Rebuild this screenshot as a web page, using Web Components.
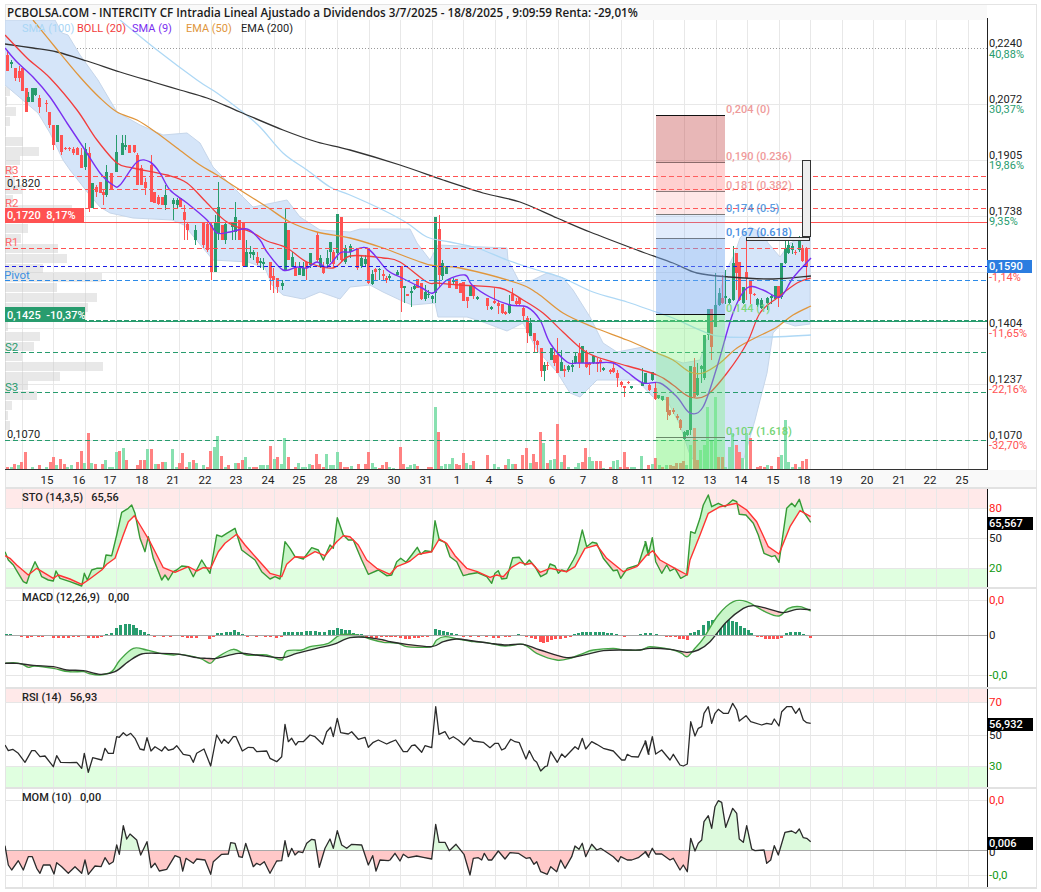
<!DOCTYPE html>
<html lang="es">
<head>
<meta charset="utf-8">
<title>PCBOLSA.COM - INTERCITY CF</title>
<style>
  html, body { margin: 0; background: #fff; }
  body { font-family: Roboto, "Liberation Sans", sans-serif; }
</style>
</head>
<body>
<chart-page>
  <chart-title>PCBOLSA.COM - INTERCITY CF Intradia Lineal Ajustado a Dividendos 3/7/2025 - 18/8/2025 , 9:09:59 Renta: -29,01%</chart-title>
  <price-panel></price-panel>
  <osc-panel kind="sto">STO (14,3,5)&nbsp;&nbsp; 65,56</osc-panel>
  <osc-panel kind="macd">MACD (12,26,9)&nbsp;&nbsp; 0,00</osc-panel>
  <osc-panel kind="rsi">RSI (14)&nbsp;&nbsp; 56,93</osc-panel>
  <osc-panel kind="mom">MOM (10)&nbsp;&nbsp; 0,00</osc-panel>
</chart-page>

<script>
// ---- helpers ----
const GREEN = '#289c6e', RED = '#ff5252';
const P_LEFT = 5, P_AXIS = 987, P_RIGHT = 1037;
// vertical day lines, same in every panel
const dayLines = [];
for (let k = 0; k < 31; k++) dayLines.push(Math.round(21.5 + 31.55 * k) + 0.5);

// readings were taken at 3x, so pts() brings them back to page pixels
const pts = (ox, oy, a) => a.map(([X, Y]) => [ox + X / 3, oy + Y / 3]);
const poly = (a) => a.map(p => p[0].toFixed(1) + ',' + p[1].toFixed(1)).join(' ');
const line = (a, c, w) => `<polyline points="${poly(a)}" fill="none" stroke="${c}" stroke-width="${w || 1.4}" stroke-linejoin="round"/>`;
const hline = (y, c, dash, x2, w) => `<line x1="${P_LEFT}" x2="${x2 || P_AXIS}" y1="${y}" y2="${y}" stroke="${c}" stroke-width="${w || 1}"${dash ? ` stroke-dasharray="${dash}"` : ''}/>`;
const text = (x, y, s, c, extra) => `<text x="${x}" y="${y + 4}" fill="${c}" ${extra || ''}>${s}</text>`;
const frame = (top, bottom) => `<g shape-rendering="crispEdges" stroke="#e4e4e4"><line x1="5.5" x2="5.5" y1="${top}" y2="${bottom}"/><line x1="1036.5" x2="1036.5" y1="${top}" y2="${bottom}"/></g>`;

// moving averages are curves, not corners
function curve(a, c, w) {
  let d = `M${a[0][0]} ${a[0][1]}`;
  for (let i = 0; i < a.length - 1; i++) {
    const p0 = a[i - 1] || a[i], p1 = a[i], p2 = a[i + 1], p3 = a[i + 2] || p2;
    const c1 = [p1[0] + (p2[0] - p0[0]) / 6, p1[1] + (p2[1] - p0[1]) / 6];
    const c2 = [p2[0] - (p3[0] - p1[0]) / 6, p2[1] - (p3[1] - p1[1]) / 6];
    d += `C${c1[0].toFixed(1)} ${c1[1].toFixed(1)} ${c2[0].toFixed(1)} ${c2[1].toFixed(1)} ${p2[0]} ${p2[1]}`;
  }
  return `<path d="${d}" fill="none" stroke="${c}" stroke-width="${w || 1.3}"/>`;
}

function at(series, x) {
  if (x <= series[0][0]) return series[0][1];
  for (let i = 1; i < series.length; i++) {
    if (x <= series[i][0]) {
      const [x0, y0] = series[i - 1], [x1, y1] = series[i];
      return y0 + (y1 - y0) * (x - x0) / (x1 - x0 || 1);
    }
  }
  return series[series.length - 1][1];
}

// filled area between two series, one colour per side
function fillBetween(a, b, up, down) {
  const start = Math.max(a[0][0], b[0][0]), end = Math.min(a[a.length - 1][0], b[b.length - 1][0]);
  let out = '', run = [], sign = 0;
  const flush = () => {
    if (run.length > 1) {
      const shape = run.map(r => [r[0], r[1]]).concat(run.slice().reverse().map(r => [r[0], r[2]]));
      out += `<polygon points="${poly(shape)}" fill="${sign > 0 ? up : down}"/>`;
    }
  };
  for (let x = start; x <= end; x += 0.5) {
    const ya = at(a, x), yb = at(b, x), s = ya < yb ? 1 : -1;
    if (s !== sign && sign !== 0) { flush(); run = run.slice(-1); }
    sign = s;
    run.push([x, ya, yb]);
  }
  flush();
  return out;
}

function gridV(top, bottom) {
  return dayLines.map(x => `<line x1="${x}" x2="${x}" y1="${top}" y2="${bottom}" stroke="#e8e8e8"/>`).join('');
}

// ---- price data ----
// x, body top, body bottom, high, low, colour
const candles = [
[7,55,71,50,71,'r'],[11,62,64,60,68,'g'],[15,68,78,68,81,'r'],[19,71,78,66,82,'r'],[22,68,91,68,91,'r'],[26,88,112,88,112,'r'],
[28,97,102,92,102,'g'],[32,88,102,88,102,'g'],[35,88,95,88,96,'g'],[39,98,107,95,113,'r'],[46,103,104,100,112,'r'],[49,112,125,112,128,'r'],
[53,125,145,125,150,'r'],[57,125,142,125,142,'g'],[61,135,152,135,155,'r'],[65,148,149,147,150,'r'],[69,148,149,147,151,'r'],[73,149,153,147,155,'r'],
[77,148,155,147,155,'r'],[81,155,168,148,168,'r'],[85,149,167,143,170,'g'],[89,153,208,147,212,'r'],[92,183,208,183,208,'g'],[96,187,192,185,197,'r'],
[100,182,193,182,193,'r'],[103,192,195,190,205,'r'],[106,172,195,165,197,'g'],[111,173,189,173,189,'r'],[116,152,172,135,172,'g'],[122,143,155,135,155,'g'],
[125,145,147,135,150,'g'],[129,145,153,145,153,'r'],[134,145,152,145,153,'r'],[137,155,185,153,185,'r'],[141,168,185,165,185,'r'],[145,182,188,178,195,'r'],
[151,165,202,155,202,'r'],[154,192,203,192,203,'r'],[158,197,204,195,205,'r'],[162,197,205,197,205,'r'],[165,195,205,185,210,'g'],[173,200,204,198,220,'g'],
[177,200,205,198,208,'g'],[180,198,207,198,207,'r'],[184,212,220,205,240,'r'],[187,224,230,222,240,'r'],[195,230,240,225,245,'g'],[203,223,245,222,248,'r'],
[207,224,250,222,252,'r'],[211,225,272,222,280,'r'],[215,223,272,215,272,'g'],[218,207,233,182,240,'g'],[222,225,240,225,240,'r'],[225,224,240,222,244,'g'],
[232,222,227,222,240,'g'],[235,217,232,202,240,'g'],[239,220,240,220,240,'r'],[243,222,266,222,266,'r'],[246,252,267,240,267,'g'],[250,252,254,246,258,'g'],
[253,252,255,250,260,'g'],[257,257,263,252,265,'r'],[260,261,263,258,268,'g'],[263,262,264,258,270,'g'],[270,262,278,262,290,'r'],[273,276,280,268,293,'r'],
[277,278,287,278,293,'r'],[282,283,286,280,290,'g'],[285,222,270,208,270,'g'],[288,230,260,230,260,'r'],[292,257,267,252,267,'g'],[295,267,276,262,276,'r'],
[299,268,275,262,275,'g'],[303,268,276,262,276,'g'],[306,262,268,262,280,'r'],[310,253,265,253,268,'g'],[317,235,260,232,262,'r'],[320,258,266,255,268,'g'],
[323,268,273,262,274,'r'],[327,258,264,250,268,'g'],[330,242,252,242,262,'g'],[333,252,264,250,268,'r'],[337,214,253,214,260,'g'],[341,217,260,217,262,'r'],
[345,248,262,245,264,'g'],[350,246,252,244,258,'g'],[357,248,268,248,270,'r'],[361,258,266,255,268,'g'],[365,259,264,255,266,'g'],[368,248,283,248,284,'r'],
[372,274,284,270,285,'g'],[375,269,272,268,280,'r'],[379,269,270,268,280,'g'],[383,274,276,270,280,'r'],[386,278,280,276,283,'r'],[389,276,278,274,280,'g'],
[397,272,275,270,275,'g'],[401,266,288,266,312,'r'],[404,286,288,286,303,'g'],[407,294,296,294,296,'r'],[411,291,293,287,307,'g'],[414,286,289,284,290,'g'],
[417,279,288,279,288,'r'],[421,283,299,283,300,'r'],[425,292,299,285,301,'g'],[428,294,295,290,298,'g'],[432,296,299,295,303,'g'],[435,217,293,217,303,'g'],
[439,229,275,215,287,'r'],[442,263,276,260,280,'g'],[446,266,274,266,274,'g'],[449,279,288,279,288,'r'],[453,280,282,278,284,'g'],[456,279,289,279,289,'r'],
[460,283,293,283,293,'r'],[463,282,301,282,301,'r'],[467,297,301,297,308,'r'],[470,285,296,285,296,'g'],[473,285,296,285,299,'r'],[477,297,299,296,300,'g'],
[487,298,306,298,310,'r'],[491,307,309,306,310,'g'],[494,301,303,288,304,'r'],[498,303,306,300,314,'r'],[502,304,313,304,314,'r'],[505,312,314,311,315,'r'],
[509,304,313,295,314,'g'],[512,294,301,288,301,'r'],[516,301,304,298,305,'r'],[519,298,304,298,305,'r'],[523,308,316,306,322,'r'],[527,318,333,316,343,'r'],
[530,323,336,318,336,'g'],[534,333,341,333,352,'r'],[537,341,345,340,352,'r'],[541,348,371,348,377,'r'],[544,365,371,362,381,'g'],[547,365,366,362,370,'r'],
[551,348,360,348,360,'g'],[554,355,363,350,366,'r'],[557,355,373,338,373,'r'],[561,362,371,350,371,'g'],[564,369,371,365,377,'r'],[568,366,370,365,372,'g'],
[572,365,367,360,372,'g'],[575,356,363,352,364,'g'],[579,353,363,343,368,'r'],[582,346,363,346,363,'g'],[586,353,367,350,368,'r'],[589,363,365,362,375,'r'],
[593,356,363,356,364,'g'],[597,362,364,358,372,'r'],[600,360,362,358,372,'r'],[603,368,370,367,371,'g'],[610,370,372,369,374,'r'],[613,368,372,362,373,'r'],
[617,373,378,370,387,'r'],[621,382,385,381,387,'r'],[624,386,388,386,397,'r'],[628,382,383,381,384,'r'],[631,386,388,386,389,'g'],[642,383,386,368,386,'g'],
[645,373,383,373,384,'g'],[649,385,390,384,391,'r'],[652,372,380,372,381,'g'],[655,388,399,383,400,'r'],[658,395,398,395,399,'g'],[662,396,400,396,401,'g'],
[667,397,412,397,420,'r'],[669,410,415,410,416,'r'],[673,410,412,408,414,'r'],[677,416,418,414,420,'r'],[680,420,428,419,430,'r'],[684,432,439,431,440,'g'],
[687,430,435,430,436,'g'],[690,366,430,366,435,'g'],[694,367,397,358,398,'r'],[697,378,395,363,396,'g'],[701,366,369,365,383,'g'],[704,335,378,335,380,'g'],
[708,309,335,309,340,'g'],[711,309,347,309,360,'r'],[715,305,327,273,327,'g'],[719,293,305,288,306,'g'],[722,298,303,275,304,'r'],[725,296,298,270,304,'g'],
[729,299,303,298,304,'g'],[733,263,300,246,301,'g'],[736,253,273,253,290,'r'],[739,262,300,262,301,'r'],[743,287,303,287,304,'g'],[746,272,278,237,300,'r'],
[750,280,294,280,304,'r'],[754,294,295,293,296,'r'],[757,299,305,298,307,'g'],[761,300,308,298,309,'g'],[767,298,303,297,310,'g'],[771,296,298,295,304,'g'],
[775,286,299,286,300,'g'],[778,286,297,286,307,'r'],[781,263,297,263,299,'g'],[785,248,263,238,264,'g'],[788,245,253,240,254,'g'],[792,246,250,243,254,'g'],
[795,252,253,250,255,'r'],[799,240,250,236,252,'g'],[802,248,261,245,262,'r'],[806,248,267,247,280,'r']
];

// x, bar top, colour
const volumes = [
...[[22,680,'r'],[33,682,'g'],[44,673,'r'],[55,676,'g'],[65,667,'r'],[76,637,'r'],[98,682,'g'],[118,676,'r'],[140,680,'g'],[150,665,'r'],[160,650,'r'],[170,676,'g'],[181,658,'r'],[192,672,'r'],[203,682,'g'],[213,676,'g'],[232,665,'r'],[244,634,'r'],[254,668,'g'],[265,580,'r'],[275,668,'g'],[286,673,'r'],[308,673,'r'],[316,660,'g'],[328,680,'g'],[338,680,'g'],[349,637,'g'],[359,632,'r'],[370,625,'g'],[380,660,'r'],[412,676,'r'],[422,660,'r'],[433,660,'r'],[443,628,'g'],[454,628,'r'],[465,673,'g'],[476,672,'r'],[486,665,'r'],[496,667,'g'],[518,628,'g'],[528,680,'g'],[538,670,'r'],[548,640,'r'],[558,680,'r'],[568,667,'g'],[580,660,'r'],[590,670,'g'],[610,676,'g'],[622,682,'r'],[632,634,'r'],[643,622,'g'],[652,587,'g'],[664,649,'r'],[675,680,'g'],[685,676,'r'],[706,670,'g'],[716,670,'r'],[727,660,'r'],[737,652,'g'],[748,682,'g'],[760,680,'r'],[770,680,'r'],[780,676,'g'],[791,676,'g'],[802,674,'g'],[812,619,'r'],[823,658,'g'],[833,652,'r'],[844,673,'g'],[854,595,'g'],[865,652,'r'],[886,680,'r'],[896,670,'g'],[907,682,'g'],[917,682,'g'],[928,672,'g'],[938,676,'r'],[949,643,'r'],[959,673,'r'],[970,680,'r'],[980,643,'g'],[990,676,'g'],[1000,676,'g'],[1012,637,'g'],[1022,667,'r'],[1033,680,'r'],[1043,682,'r']].map(v => [v[0] / 3, 240 + v[1] / 3, v[2]]),
...[[5,858,'g'],[25,853,'r'],[45,853,'r'],[55,815,'r'],[66,850,'g'],[76,860,'g'],[87,863,'r'],[98,855,'r'],[108,847,'r'],[118,860,'g'],[130,865,'g'],[152,802,'r'],[160,853,'r'],[172,860,'g'],[182,855,'g'],[192,853,'g'],[203,857,'r'],[235,860,'r'],[245,860,'r'],[256,682,'g'],[266,757,'r'],[275,857,'g'],[287,853,'g'],[298,853,'g'],[308,835,'g'],[319,853,'r'],[329,855,'r'],[340,820,'r'],[350,850,'g'],[360,855,'g'],[370,842,'r'],[412,826,'r'],[433,852,'g'],[445,860,'g'],[466,855,'r'],[476,838,'g'],[487,853,'g'],[497,852,'r'],[518,826,'r'],[529,805,'r'],[540,848,'g'],[550,823,'r'],[560,845,'r'],[571,757,'r'],[581,790,'g'],[592,848,'r'],[602,840,'g'],[612,838,'g'],[622,733,'r'],[634,847,'g'],[644,826,'r'],[655,860,'g'],[676,860,'g'],[686,848,'g'],[697,845,'r'],[706,805,'r'],[717,832,'g'],[728,842,'g'],[740,843,'r'],[750,843,'r'],[760,865,'g'],[780,862,'r'],[790,842,'g'],[802,840,'g'],[812,862,'r'],[823,817,'r'],[833,862,'r'],[844,862,'g'],[854,860,'g'],[875,828,'g'],[896,855,'r'],[907,852,'g'],[917,835,'r']].map(v => [350 + v[0] / 3, 180 + v[1] / 3, v[2]]),
...[[47,1075,'r'],[58,1095,'g'],[68,1100,'r'],[80,1095,'g'],[90,1095,'r'],[100,1097,'r'],[110,1090,'r'],[120,1088,'r'],[130,1082,'r'],[140,1095,'g'],[150,1035,'g'],[163,985,'r'],[172,1080,'r'],[182,1050,'g'],[192,1035,'g'],[203,920,'g'],[215,1020,'g'],[226,890,'g'],[236,1072,'r'],[247,1070,'r'],[256,1100,'g'],[268,1040,'g'],[278,1000,'g'],[288,1035,'r'],[298,1055,'r'],[308,1075,'g'],[319,1000,'g'],[330,1015,'r'],[352,1100,'r'],[362,1097,'r'],[372,1100,'r'],[382,1095,'g'],[394,1098,'r'],[414,1070,'r'],[424,1065,'g'],[436,960,'g'],[446,1085,'g'],[456,1100,'g'],[467,1092,'r'],[478,1100,'g'],[488,1082,'r'],[499,1078,'r']].map(v => [640 + v[0] / 3, 100 + v[1] / 3, v[2]])
];

// volume profile: top, width
const profile = [[87,5],[97,2],[107,11],[117,5],[127,1],[137,18],[147,34],[156,15],[166,8],[176,10],[185,17],[195,8],[205,67],[214,79],[224,23],[234,16],[244,53],[254,62],[264,38],[273,97],[283,52],[293,92],[303,83],[313,80],[322,3],[332,35],[342,29],[352,17],[362,98],[372,55],[381,23],[391,32],[401,7],[411,3],[421,5]];

const band = [[5,20],[55,20],[62,33],[68,35],[80,55],[98,80],[108,97],[117,112],[140,125],[163,135],[187,133],[200,143],[213,167],[223,177],[253,207],[287,200],[300,217],[320,230],[350,232],[360,229],[410,229],[417,243],[430,260],[438,245],[507,248],[508,260],[520,283],[533,280],[547,273],[563,278],[573,290],[590,317],[603,343],[617,352],[643,347],[660,355],[683,363],[700,360],[710,330],[725,273],[735,253],[740,238],[750,227],[762,233],[768,243],[780,257],[790,243],[803,237],[810,235],[810,324],[795,326],[783,322],[773,333],[767,373],[755,420],[743,462],[735,469],[700,469],[690,455],[680,425],[667,400],[653,397],[637,380],[597,380],[580,397],[570,393],[557,372],[537,350],[523,323],[507,331],[483,322],[467,317],[438,317],[435,303],[412,305],[400,300],[383,292],[370,285],[350,287],[340,299],[320,292],[303,299],[283,295],[272,285],[265,268],[248,262],[213,260],[184,225],[172,220],[133,218],[110,213],[100,207],[88,193],[70,170],[63,160],[50,133],[38,113],[5,85]];

const sma100 = [[120,20],[157,50],[197,80],[217,93],[240,110],[260,127],[283,153],[307,170],[330,187],[350,195],[383,210],[407,223],[427,237],[450,242],[477,248],[507,260],[537,270],[563,278],[593,292],[627,302],[653,311],[673,318],[707,333],[727,337],[773,337],[811,335]];
const ema200 = [[5,44],[33,48],[57,52],[87,61],[120,72],[153,82],[180,90],[207,98],[240,112],[283,130],[317,142],[350,150],[400,165],[443,180],[483,193],[520,202],[557,218],[590,232],[637,250],[673,263],[697,273],[730,277],[773,279],[811,276]];
const ema50 = [[33,20],[55,47],[80,77],[100,98],[117,112],[137,120],[157,133],[177,148],[200,165],[217,175],[240,190],[267,207],[290,222],[317,232],[350,238],[383,248],[430,265],[460,268],[517,283],[537,293],[563,313],[593,327],[627,340],[657,353],[673,360],[690,372],[703,373],[720,363],[737,348],[757,337],[777,327],[793,315],[811,306]];
const boll = [[5,35],[27,58],[50,78],[77,110],[97,140],[117,163],[133,168],[167,175],[187,183],[207,203],[227,222],[253,233],[267,241],[287,248],[307,262],[333,268],[350,256],[383,258],[400,262],[427,282],[437,283],[460,285],[500,288],[523,300],[543,313],[563,332],[583,350],[597,357],[617,363],[657,375],[673,385],[690,397],[707,395],[727,373],[747,343],[760,313],[777,298],[797,283],[811,278]];
const sma9 = [[5,48],[17,62],[33,77],[50,97],[67,123],[83,147],[100,173],[113,185],[120,185],[137,162],[150,162],[160,173],[170,190],[187,203],[207,220],[217,233],[230,232],[247,229],[260,240],[267,252],[283,270],[297,267],[307,268],[317,262],[327,267],[340,253],[350,252],[367,248],[387,270],[400,277],[422,288],[433,293],[447,280],[465,275],[472,285],[490,297],[510,305],[527,307],[540,320],[550,343],[567,362],[577,363],[593,363],[613,363],[627,372],[643,383],[660,383],[677,397],[690,413],[703,407],[717,367],[733,313],[747,288],[763,290],[780,297],[793,278],[811,258]];

// ---- oscillator data ----
const sto = {
  k: [...pts(0,485,[[15,200],[25,225],[40,240],[55,265],[70,290],[80,295],[90,265],[105,230],[115,250],[125,275],[145,285],[160,288],[168,258],[180,280],[210,290],[245,303],[253,265],[262,285],[275,255],[290,250],[310,250],[318,210],[335,212],[350,150],[365,82],[385,70],[395,60],[405,85],[420,160],[435,200],[445,155],[460,220],[485,285],[495,270],[505,285],[520,260],[530,255],[545,243],[565,245],[580,275],[605,225],[630,265],[650,150],[665,155],[680,145],[705,130],[725,195],[745,210],[765,225],[785,260],[810,282],[825,275],[840,282],[855,170],[870,190],[885,215],[910,222],[935,188],[955,195],[970,225],[990,180],[1000,190],[1012,98],[1030,150],[1045,165],[1060,165],[1085,225],[1105,268],[1135,255],[1160,272],[1175,270]]),
      ...pts(390,485,[[20,230],[32,220],[48,232],[65,210],[82,187],[93,208],[105,197],[125,200],[135,107],[148,165],[165,172],[180,215],[200,230],[220,272],[235,268],[262,263],[290,275],[305,295],[315,265],[325,257],[335,282],[350,280],[368,218],[388,217],[405,240],[418,225],[435,245],[452,275],[470,265],[480,237],[495,243],[505,265],[515,255],[530,260],[550,225],[560,205],[577,135],[590,185],[607,172],[620,175],[640,220],[670,257],[682,255],[692,280],[712,250],[745,240],[767,170],[777,210]]),
      ...pts(640,485,[[15,170],[25,210],[37,158],[47,230],[65,265],[80,240],[90,258],[105,250],[122,280],[140,270],[152,140],[165,145],[180,100],[190,60],[205,30],[215,65],[235,55],[255,65],[278,45],[290,50],[298,88],[318,90],[340,115],[355,150],[372,205],[395,215],[405,212],[417,232],[440,70],[455,55],[465,65],[478,43],[490,80],[512,112]])],
  d: [...pts(0,485,[[15,212],[30,220],[50,240],[85,270],[110,250],[140,268],[160,280],[175,270],[210,282],[245,298],[265,285],[305,255],[320,238],[345,220],[370,150],[385,110],[403,92],[420,120],[450,170],[490,248],[525,262],[565,245],[590,258],[610,248],[632,250],[655,200],[675,175],[710,148],[735,180],[770,220],[810,265],[845,275],[860,238],[885,215],[915,217],[945,200],[975,212],[1010,170],[1030,152],[1050,155],[1075,180],[1100,225],[1130,250],[1170,268]]),
      ...pts(390,485,[[20,245],[45,235],[60,228],[85,208],[125,200],[148,162],[170,175],[195,212],[230,250],[262,260],[300,277],[320,270],[340,275],[365,247],[390,232],[410,238],[425,235],[450,262],[480,250],[505,255],[530,260],[555,245],[585,190],[620,180],[650,220],[700,260],[740,245],[770,210]]),
      ...pts(640,485,[[15,215],[38,197],[60,225],[105,250],[142,270],[150,225],[180,150],[205,85],[240,65],[290,55],[320,75],[350,110],[385,185],[417,207],[450,125],[480,77],[512,95]])]
};
const macd = {
  m: [...pts(0,485,[[15,535],[40,533],[65,537],[85,547],[105,543],[160,550],[205,560],[250,560],[265,565],[300,570],[335,560],[360,525],[400,490],[440,495],[480,505],[520,510],[540,508],[600,520],[630,535],[650,518],[700,493],[740,510],[800,510],[845,525],[860,498],[905,495],[930,485],[985,475],[1020,450],[1070,450],[1110,462],[1150,472]]),
      ...pts(390,485,[[0,473],[25,475],[50,485],[85,487],[125,485],[140,465],[165,455],[205,462],[250,470],[290,473],[345,483],[400,478],[440,505],[500,525],[540,520],[580,505],[610,495],[670,490],[700,495],[750,495],[770,488]]),
      ...pts(640,485,[[30,485],[60,488],[100,495],[125,505],[142,515],[165,490],[190,460],[235,390],[280,350],[320,350],[375,380],[417,393],[445,370],[480,365],[512,378]])],
  s: [...pts(0,485,[[15,535],[50,535],[100,541],[160,545],[200,555],[250,557],[300,568],[345,560],[385,530],[425,507],[480,505],[540,508],[590,518],[620,520],[650,520],[715,505],[770,510],[845,518],[890,505],[950,490],[1000,478],[1050,458],[1100,457],[1150,465]]),
      ...pts(390,485,[[0,470],[50,478],[125,485],[160,470],[200,462],[250,468],[300,475],[350,480],[400,478],[450,495],[530,518],[590,508],[640,497],[700,495],[750,495]]),
      ...pts(640,485,[[30,490],[90,493],[140,502],[175,495],[210,470],[260,410],[310,370],[340,362],[380,370],[430,383],[470,373],[512,374]])],
  // histogram: x at 3x with signed height
  h: [[0,[[18,1],[30,1],[65,-1],[82,-2],[95,-1],[115,-1],[128,-1],[160,-2],[175,-2],[190,-2],[205,-2],[220,-1],[235,-1],[265,-2],[280,-2],[292,-2],[305,-1],[320,1],[335,2],[350,7],[362,10],[375,11],[387,11],[399,10],[410,7],[420,5],[432,3],[445,1],[462,-1],[490,-1],[510,-1],[548,-1],[562,-2],[575,-2],[588,-2],[628,-3],[640,-1],[653,2],[665,2],[678,3],[690,3],[703,5],[716,3],[728,1],[742,-1],[770,-1],[795,-1],[812,-1],[830,-2],[845,-1],[853,3],[865,3],[878,3],[892,3],[905,3],[918,4],[930,4],[945,4],[958,3],[972,3],[988,5],[1000,5],[1012,7],[1024,6],[1036,5],[1048,5],[1060,2],[1072,1],[1085,1],[1100,-1],[1115,-2],[1130,-2],[1145,-1],[1160,-1],[1175,-1]]],
      [390,[[0,-1],[15,-1],[32,-2],[45,-3],[58,-3],[72,-2],[85,-2],[97,-1],[112,-1],[135,6],[147,5],[160,4],[172,3],[185,2],[198,1],[220,-1],[240,-1],[265,-1],[290,-1],[310,-2],[325,-2],[345,-1],[358,-1],[385,1],[410,-1],[425,-2],[435,-3],[450,-6],[460,-7],[472,-6],[485,-4],[497,-3],[512,-3],[525,-2],[540,-1],[553,1],[565,2],[578,3],[590,3],[602,3],[615,3],[628,3],[640,3],[652,2],[665,2],[680,1],[703,-1],[752,1],[765,2]]],
      [640,[[32,2],[48,1],[78,-1],[92,-1],[105,-1],[118,-3],[130,-3],[142,-4],[150,2],[162,3],[175,5],[190,10],[204,14],[216,15],[228,17],[240,17],[252,16],[265,15],[278,14],[290,13],[300,9],[312,7],[325,5],[335,2],[352,-1],[365,-1],[375,-3],[388,-3],[400,-3],[412,-3],[425,-2],[438,2],[450,3],[465,3],[478,3],[490,1],[512,-2]]]]
};
const rsi = [...pts(0,685,[[15,180],[25,197],[38,193],[55,205],[75,232],[95,197],[105,197],[120,215],[135,213],[160,245],[170,212],[182,232],[210,233],[230,232],[245,250],[253,205],[265,262],[278,218],[305,225],[315,190],[325,205],[340,205],[350,155],[358,157],[370,143],[380,152],[392,145],[405,160],[420,192],[432,195],[441,158],[453,198],[465,185],[485,198],[495,185],[505,196],[520,192],[530,182],[550,208],[570,212],[580,232],[590,205],[612,192],[632,243],[650,150],[665,175],[672,163],[685,175],[700,155],[708,155],[727,198],[745,187],[760,188],[770,200],[800,198],[810,220],[830,230],[845,215],[855,118],[865,170],[875,160],[887,180],[895,170],[910,170],[930,150],[945,155],[968,178],[980,140],[992,127],[1000,155],[1012,100],[1022,143],[1045,147],[1055,140],[1075,163],[1095,157],[1105,187],[1120,172],[1135,165],[1160,177]]),
  ...pts(390,685,[[0,172],[17,165],[30,185],[40,200],[52,200],[65,182],[75,180],[95,202],[105,182],[125,188],[137,65],[147,148],[165,140],[178,162],[190,155],[205,165],[222,180],[240,158],[250,168],[280,172],[300,188],[315,175],[325,175],[335,195],[345,190],[362,163],[375,170],[388,173],[408,222],[418,197],[432,225],[440,232],[452,258],[465,245],[472,243],[482,200],[502,232],[515,207],[525,217],[555,185],[565,193],[577,160],[587,192],[605,170],[620,178],[640,190],[670,198],[695,225],[705,225],[712,208],[725,215],[745,216],[767,168],[777,208]]),
  ...pts(640,685,[[15,168],[25,207],[37,155],[47,207],[65,195],[90,225],[100,208],[120,240],[130,243],[142,237],[152,110],[165,153],[175,130],[185,125],[192,85],[205,65],[215,115],[225,85],[235,73],[250,85],[265,85],[278,55],[290,75],[298,108],[318,92],[332,110],[365,120],[380,115],[395,118],[403,102],[417,123],[425,80],[440,65],[455,65],[467,85],[478,70],[490,105],[500,113],[512,115]])];
const mom = [...pts(0,685,[[15,482],[25,540],[35,555],[55,527],[70,555],[85,515],[97,515],[110,550],[120,565],[130,540],[150,540],[162,567],[170,533],[185,545],[205,565],[225,545],[245,565],[255,525],[265,568],[285,543],[303,545],[315,518],[328,538],[340,530],[350,480],[358,508],[370,422],[380,462],[390,447],[410,465],[422,510],[441,470],[453,548],[465,535],[478,558],[500,553],[525,512],[540,518],[548,558],[558,520],[580,535],[590,522],[615,525],[632,568],[640,530],[665,508],[685,507],[692,473],[705,475],[717,515],[727,517],[737,475],[760,545],[770,535],[780,540],[793,530],[810,565],[830,528],[845,527],[855,467],[865,515],[875,490],[885,510],[895,500],[908,503],[920,475],[935,463],[945,465],[958,547],[975,490],[990,462],[1000,490],[1012,437],[1025,480],[1040,490],[1055,478],[1085,480],[1105,540],[1118,512],[1128,558],[1140,525],[1165,527]]),
  ...pts(390,685,[[0,525],[15,505],[30,528],[40,508],[55,518],[80,513],[100,517],[125,522],[137,418],[147,472],[165,472],[178,497],[198,478],[222,508],[240,570],[250,520],[265,518],[275,525],[283,505],[295,525],[305,525],[325,498],[345,522],[360,503],[385,505],[408,520],[420,518],[432,538],[440,530],[452,560],[472,568],[482,545],[500,560],[512,525],[525,550],[545,515],[555,483],[567,493],[577,475],[587,515],[605,478],[620,495],[632,490],[670,515],[685,530],[692,515],[712,525],[725,525],[745,518],[767,500],[777,517]]),
  ...pts(640,685,[[15,500],[25,515],[37,490],[47,507],[65,507],[90,525],[100,520],[120,555],[130,540],[142,560],[152,460],[165,498],[175,475],[185,465],[192,410],[205,392],[215,430],[225,365],[235,347],[245,352],[257,427],[278,370],[290,385],[298,462],[310,472],[320,422],[335,492],[345,497],[372,495],[380,535],[392,525],[403,482],[415,510],[435,442],[455,438],[467,445],[478,432],[490,458],[500,460],[512,470]])];

const PANELS = {
  sto: {
    top: 489, labelY: 497,
    bands: [[489, 508, '#ffe9e9'], [568, 587, '#e0ffe0']], grid: [508, 538, 568],
    axis: [[508, '80', '#f22'], [538, '50', '#222'], [568, '20', '#191']],
    box: [517, '65,567'],
    draw: () => fillBetween(sto.k, sto.d, '#c9f6c9', '#ffc8c8') + line(sto.k, '#359a35') + line(sto.d, '#ff3333')
  },
  macd: {
    top: 589, labelY: 597,
    bands: [], grid: [600, 675], zero: 635,
    axis: [[600, '0,0', '#f22'], [635, '0', '#222'], [675, '-0,0', '#191']],
    draw: () => {
      let bars = '';
      macd.h.forEach(([ox, list]) => list.forEach(([X, h]) => {
        const x = Math.round(ox + X / 3 - 1.5);
        bars += `<rect x="${x}" width="3" y="${h > 0 ? 635 - h : 636}" height="${Math.abs(h)}" fill="${h > 0 ? GREEN : RED}"/>`;
      }));
      return `<g shape-rendering="crispEdges">${bars}</g>` + fillBetween(macd.m, macd.s, '#c9f6c9', '#ffc8c8') + curve(macd.m, '#45a545', 1.4) + curve(macd.s, '#2b2b2b', 1.4);
    }
  },
  rsi: {
    top: 689, labelY: 697,
    bands: [[689, 702, '#ffe9e9'], [767, 787, '#e0ffe0']], grid: [702, 735, 766],
    axis: [[702, '70', '#f22'], [735, '50', '#222'], [766, '30', '#191']],
    box: [718, '56,932'],
    draw: () => line(rsi, '#2b2b2b', 1.3)
  },
  mom: {
    top: 789, labelY: 797,
    bands: [], grid: [800, 875], zero: 850,
    axis: [[800, '0,0', '#f22'], [852, '0', '#222'], [875, '-0,0', '#191']],
    box: [837, '0,006'],
    draw: () => fillBetween(mom, [[5, 850.5], [812, 850.5]], '#ddfadd', '#ffc8c8')
  }
};

// ---- elements ----
class ChartPage extends HTMLElement {
  connectedCallback() {
    this.attachShadow({ mode: 'open' });
    this.shadowRoot.innerHTML = `
      <style>
        :host { display: flex; flex-direction: column; width: 1041px; padding: 4px 0 0 ${P_LEFT}px; box-sizing: border-box; }
      </style>
      <slot></slot>`;
  }
}

class ChartTitle extends HTMLElement {
  connectedCallback() {
    this.attachShadow({ mode: 'open' });
    this.shadowRoot.innerHTML = `
      <style>
        :host { display: block; box-sizing: border-box; height: 16px; width: 1032px; padding-left: 1px; color: #1a1a1a; white-space: nowrap;
                border: 1px solid #e4e4e4; border-width: 1px 1px 0 1px;
                background: linear-gradient(#222, #222) 981px 13px / 1px 2px no-repeat, linear-gradient(#f9f9f9, #f9f9f9) 0 0 / 981px 100% no-repeat;
                font: 600 11.65px/15px "Open Sans", Roboto, sans-serif; }
      </style>
      <slot></slot>`;
  }
}

class PricePanel extends HTMLElement {
  connectedCallback() {
    this.attachShadow({ mode: 'open' });
    this.shadowRoot.innerHTML = `
      <style>
        :host { display: block; height: 467px; border-bottom: 2px solid #e2e2e2; width: 1032px; }
        svg { display: block; font: 11px Roboto, sans-serif; }
      </style>
      <svg width="1032" height="467" viewBox="5 20 1032 467">${this.drawing()}</svg>`;
  }

  drawing() {
    let s = '<rect x="5" y="470" width="1032" height="17" fill="#f9f9f9"/>' + frame(20, 487);
    s += '<clipPath id="plot"><rect x="5" y="20" width="982" height="449"/></clipPath>';
    s += `<g shape-rendering="crispEdges">${gridV(20, 469)}`;
    [104, 160, 216, 272, 328, 384].forEach(y => { s += hline(y + 0.5, '#e8e8e8'); });
    s += hline(48.5, '#999', '1,2');
    s += hline(440.5, '#e8e8e8');
    s += '</g><g clip-path="url(#plot)">';
    s += profile.map(([y, w]) => `<rect x="5" y="${y}" width="${w}" height="9" fill="#c8c8c8" opacity=".42"/>`).join('');
    s += `<polygon points="${poly(band)}" fill="#d5e5f9" stroke="#c6d6ea" stroke-width="1"/>`;
    s += '<g shape-rendering="crispEdges">';
    s += volumes.map(([x, y, c]) => `<rect x="${Math.round(x - 1.5)}" y="${Math.round(y)}" width="3" height="${Math.max(1, 469 - Math.round(y))}" fill="${c === 'g' ? '#88e0b0' : '#ff8282'}"/>`).join('');
    s += candles.map(([x, t, b, hi, lo, c]) => {
      const col = c === 'g' ? GREEN : RED, cx = Math.round(x);
      return `<rect x="${cx}" y="${hi}" width="1" height="${lo - hi}" fill="${col}"/><rect x="${cx - 1}" y="${t}" width="3" height="${Math.max(1, b - t)}" fill="${col}"/>`;
    }).join('');
    s += '</g>';
    s += curve(sma100, '#aed8f5') + curve(ema200, '#333') + curve(ema50, '#e0963c') + curve(boll, '#f23c3c') + curve(sma9, '#7a2ff0', 1.4);
    s += '</g>';

    // pivots and marked prices
    s += '<g shape-rendering="crispEdges">';
    s += hline(176.5, RED, '5,3') + hline(189.5, RED, '5,3') + hline(208.5, RED, '5,3') + hline(222.5, RED) + hline(248.5, RED, '5,3');
    s += hline(266.5, '#1a1ae6', '4,3') + hline(280.5, '#2b8ae8', '5,3');
    s += hline(321, GREEN) + hline(321, GREEN, '5,2', 0, 2);
    s += hline(352.5, GREEN, '5,3') + hline(392.5, GREEN, '5,3') + hline(440.5, GREEN, '5,3');
    s += '</g>';

    // fibonacci block
    const fib = [[115, 162, 'rgba(190,50,50,.35)'], [162, 191, 'rgba(255,120,120,.35)'], [191, 214, 'rgba(255,120,120,.18)'], [214, 238, 'rgba(120,170,240,.22)'], [238, 315, 'rgba(120,170,240,.47)'], [315, 440, 'rgba(120,240,120,.35)'], [440, 469, 'rgba(100,240,100,.42)']];
    s += '<g shape-rendering="crispEdges">';
    s += fib.map(([a, b, c]) => `<rect x="656" y="${a}" width="69" height="${b - a}" fill="${c}"/>`).join('');
    [[115, '#111'], [162, '#8a6a6a'], [191, '#8a7a7a'], [214, '#7a7a7a'], [238, '#707a88'], [314, '#111'], [437, '#6a8a6a']].forEach(([y, c]) => {
      s += `<line x1="656" x2="725" y1="${y + 0.5}" y2="${y + 0.5}" stroke="${c}"/>`;
    });
    s += '</g>';
    [[109, '0,204 (0)', '#ee9a9a'], [156, '0,190 (0.236)', '#f09a9a'], [185, '0,181 (0.382)', '#f0a0a0'], [208, '0,174 (0.5)', '#5b9be0'], [232, '0,167 (0.618)', '#4a90e2'], [308, '0,144 (1)', '#7ed87e'], [431, '0,107 (1.618)', '#74d474']].forEach(([y, t, c]) => {
      s += text(726, y, t, c, 'font-weight="500"');
    });

    // price projection boxes
    s += '<rect x="802.5" y="160.5" width="8" height="76" fill="#eee" stroke="#333"/>';
    s += '<rect x="746.5" y="237.5" width="63" height="3" fill="#eee" stroke="#333"/>';

    // left labels
    s += text(5, 170, 'R3', '#ff6a6a', 'font-size="11.5"') + text(7, 183, '0,1820', '#222');
    s += text(5, 203, 'R2', '#ff6a6a', 'font-size="11.5"') + text(5, 242, 'R1', '#ff6a6a', 'font-size="11.5"');
    s += `<rect x="5" y="208" width="79" height="14" fill="${RED}"/>` + text(7, 215, '0,1720&#160;&#160;8,17%', '#fff', 'font-weight="500"');
    s += text(4, 275, 'Pivot', '#3d8fe0', 'font-size="11.5"');
    s += `<rect x="5" y="307" width="80" height="14" fill="${GREEN}"/>` + text(7, 315, '0,1425&#160;&#160;-10,37%', '#fff', 'font-weight="500"');
    s += text(5, 347, 'S2', GREEN, 'font-size="11.5"') + text(5, 387, 'S3', GREEN, 'font-size="11.5"') + text(7, 434, '0,1070', '#222');

    // legend
    [[22, 'SMA (100)', '#a9d6f5'], [77, 'BOLL (20)', '#f23c3c'], [132, 'SMA (9)', '#7a2ff0'], [186, 'EMA (50)', '#e0963c'], [241, 'EMA (200)', '#222']].forEach(([x, t, c]) => {
      s += text(x, 28, t, c);
    });

    // right axis
    s += `<line x1="987.5" x2="987.5" y1="20" y2="470" stroke="#222" shape-rendering="crispEdges"/>`;
    s += `<line x1="5" x2="987" y1="469.5" y2="469.5" stroke="#333" shape-rendering="crispEdges"/>`;
    [[43, '0,2240', '#222'], [54, '40,88%', GREEN], [99, '0,2072', '#222'], [109, '30,37%', GREEN], [155, '0,1905', '#222'], [165, '19,86%', GREEN], [211, '0,1738', '#222'], [221, '9,35%', GREEN], [277, '-1,14%', RED], [323, '0,1404', '#222'], [333, '-11,65%', RED], [379, '0,1237', '#222'], [389, '-22,16%', RED], [435, '0,1070', '#222'], [445, '-32,70%', RED]].forEach(([y, t, c]) => {
      s += text(989, y, t, c);
    });
    s += '<rect x="987" y="260" width="45" height="13" fill="#2b7de0"/>' + text(989, 266, '0,1590', '#fff', 'font-weight="500"');

    // day labels
    [15, 16, 17, 18, 21, 22, 23, 24, 25, 28, 29, 30, 31, 1, 4, 5, 6, 7, 8, 11, 12, 13, 14, 15, 18, 19, 20, 21, 22, 25].forEach((d, i) => {
      s += text(dayLines[i + 1] - 6.5, 479.5, d, '#222', 'text-anchor="middle" font-size="11.5"');
    });
    return s;
  }
}

class OscPanel extends HTMLElement {
  connectedCallback() {
    const cfg = PANELS[this.getAttribute('kind')];
    const bottom = cfg.top + 98;
    let s = cfg.bands.map(([a, b, c]) => `<rect x="5" y="${a}" width="982" height="${b - a}" fill="${c}"/>`).join('');
    s += frame(cfg.top, bottom);
    s += `<g shape-rendering="crispEdges">${gridV(cfg.top, bottom)}`;
    cfg.grid.forEach(y => { s += hline(y + 0.5, '#e6e6e6'); });
    s += '</g>';
    s += cfg.draw();
    if (cfg.zero) s += `<g shape-rendering="crispEdges">${hline(cfg.zero + 0.5, '#a8a8a8')}</g>`;
    if (this.getAttribute('kind') === 'mom') s += line(mom, '#2b2b2b', 1.3);
    s += `<line x1="987.5" x2="987.5" y1="${cfg.top}" y2="${bottom}" stroke="#111" shape-rendering="crispEdges"/>`;
    cfg.axis.forEach(([y, t, c]) => { s += text(989, y, t, c, 'font-size="11.5"'); });
    if (cfg.box) s += `<rect x="987" y="${cfg.box[0]}" width="46" height="13" fill="#000"/>` + text(989, cfg.box[0] + 6, cfg.box[1], '#fff', 'font-weight="500"');

    this.attachShadow({ mode: 'open' });
    this.shadowRoot.innerHTML = `
      <style>
        :host { display: block; position: relative; height: 98px; width: 1032px; border-bottom: 2px solid #e2e2e2; }
        svg { display: block; font: 11px Roboto, sans-serif; }
        .label { position: absolute; left: 17px; top: ${cfg.labelY - cfg.top - 6}px; color: #222; font: 500 11px/14px Roboto, sans-serif; white-space: nowrap; }
      </style>
      <svg width="1032" height="98" viewBox="5 ${cfg.top} 1032 98">${s}</svg>
      <div class="label"><slot></slot></div>`;
  }
}

customElements.define('chart-page', ChartPage);
customElements.define('chart-title', ChartTitle);
customElements.define('price-panel', PricePanel);
customElements.define('osc-panel', OscPanel);
</script>
</body>
</html>
